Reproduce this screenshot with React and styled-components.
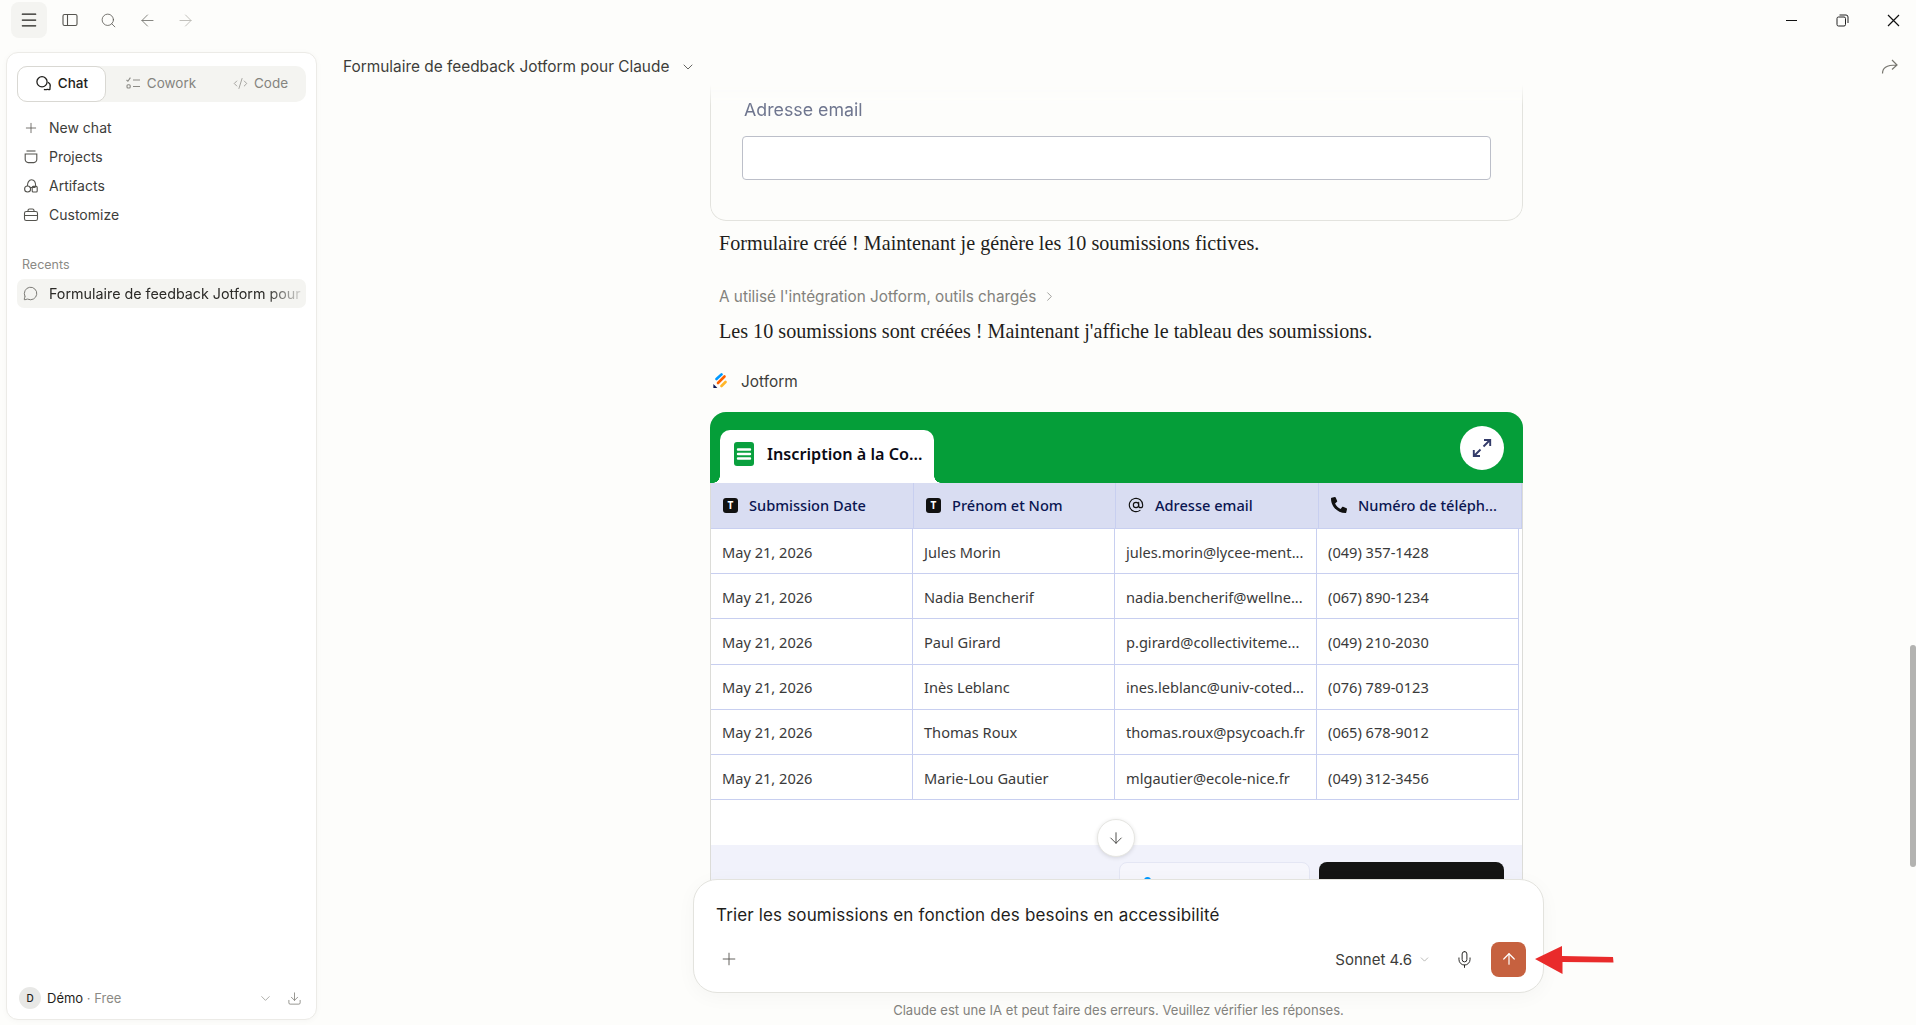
import styled, { createGlobalStyle } from "styled-components";
import { Menu, Search, ArrowLeft, ArrowRight, Plus, ChevronDown, ChevronRight, Download, Mic, ArrowUp, AtSign, MessageCircle, CodeXml } from "lucide-react";
import { FaPhone } from "react-icons/fa";

const GlobalStyle = createGlobalStyle`
  html, body { margin: 0; padding: 0; height: 100%; overflow: hidden; background: #fdfdfb; }
  #root { height: 100%; }
  * { box-sizing: border-box; }
`;

const SANS = `Inter, "Liberation Sans", sans-serif`;
const TABLE_FONT = `"Noto Sans", "Open Sans", sans-serif`;

const rows = [
  ["Jules Morin", "jules.morin@lycee-ment...", "(049) 357-1428"],
  ["Nadia Bencherif", "nadia.bencherif@wellne...", "(067) 890-1234"],
  ["Paul Girard", "p.girard@collectiviteme...", "(049) 210-2030"],
  ["Inès Leblanc", "ines.leblanc@univ-coted...", "(076) 789-0123"],
  ["Thomas Roux", "thomas.roux@psycoach.fr", "(065) 678-9012"],
  ["Marie-Lou Gautier", "mlgautier@ecole-nice.fr", "(049) 312-3456"],
];

const PanelIcon = () => (
  <svg width="16" height="16" viewBox="0 0 16 16" fill="none" stroke="#55544f" strokeWidth="1.1">
    <rect x="1" y="2.5" width="14" height="11" rx="1.5" />
    <path d="M5.5 2.5v11" />
  </svg>
);

const ChatIcon = () => (
  <svg width="17" height="17" viewBox="0 0 16 16" fill="none" stroke="#1f1e1b" strokeWidth="1.2">
    <circle cx="6.6" cy="6.4" r="4.8" />
    <path d="M12.2 6.8c1.600.8 2.400 2.200 2.100 3.800-.1.800-.3 1.300-.2 2.400.1.600-.3.900-.9.700-1-.2-1.700-.3-2.600 0-.8.200-1.500.2-2.200-.1" />
  </svg>
);

const CoworkIcon = () => (
  <svg width="16" height="16" viewBox="0 0 16 16" fill="none" stroke="#8b8a85" strokeWidth="1.1">
    <path d="M1.5 5l1.4 1.2L5.4 2.6M8 5h7M8 11.5h7" />
    <rect x="2" y="9.8" width="3.2" height="3.2" rx="1" />
  </svg>
);

const ProjectsIcon = () => (
  <svg width="16" height="16" viewBox="0 0 16 16" fill="none" stroke="#55544f" strokeWidth="1.1">
    <path d="M3.5 2h9" />
    <path d="M2.2 5h11.6v5.6a3 3 0 0 1-3 3H5.200a3 3 0 0 1-3-3z" />
  </svg>
);

const ArtifactsIcon = () => (
  <svg width="16" height="16" viewBox="0 0 16 16" fill="none" stroke="#55544f" strokeWidth="1.1">
    <circle cx="4.6" cy="11" r="3" />
    <rect x="9.2" y="8.4" width="5" height="5.6" rx="1" />
    <path d="M4.4 8C4.400 4.500 6 1.800 8.500 1.800S12.700 4.500 12.700 8.400M6.500 9.500h6" />
  </svg>
);

const BriefcaseIcon = () => (
  <svg width="16" height="16" viewBox="0 0 16 16" fill="none" stroke="#55544f" strokeWidth="1.1">
    <rect x="1.5" y="4.5" width="13" height="9" rx="1.8" />
    <path d="M5 4.500V3.500a1.500 1.500 0 0 1 1.500-1.500h3A1.500 1.500 0 0 1 11 3.500v1M1.500 8.500h13" />
  </svg>
);

const RestoreIcon = () => (
  <svg width="13" height="13" viewBox="0 0 13 13" fill="none" stroke="#222" strokeWidth="1">
    <rect x="1" y="3" width="8.5" height="9" rx="1.5" />
    <path d="M3.500 1h6.500a2 2 0 0 1 2 2v6" />
  </svg>
);

const ShareIcon = () => (
  <svg width="18" height="18" viewBox="0 0 18 18" fill="none" stroke="#77766f" strokeWidth="1.2">
    <path d="M1.500 15.500c0-5.500 3.500-8.500 14-8.500M11 2l5 5-5 4.500" />
  </svg>
);

const CloseIcon = () => (
  <svg width="13" height="13" viewBox="0 0 13 13" fill="none" stroke="#111" strokeWidth="1.2">
    <path d="M1 1l11 11M12 1L1 12" />
  </svg>
);

const JotformLogo = () => (
  <svg width="14" height="16" viewBox="0 0 14 16" fill="none" strokeLinecap="round" strokeWidth="2.6">
    <path d="M3.500 6 8.500 1.400" stroke="#0099ff" />
    <path d="M5 10 11.500 3.500" stroke="#ff6100" />
    <path d="M8.500 13 12.500 9" stroke="#ffb629" />
    <path d="M.4 11v4h4z" fill="#0a1551" />
  </svg>
);

const FormIcon = () => (
  <svg width="20" height="24" viewBox="0 0 20 24">
    <rect width="20" height="24" rx="3" fill="#09a03e" />
    <path d="M4 7.500h12M4 12h12M4 16.500h12" stroke="#fff" strokeWidth="2.4" strokeLinecap="round" />
  </svg>
);

const ExpandIcon = () => (
  <svg width="20" height="20" viewBox="0 0 20 20" fill="none" stroke="#343c6a" strokeWidth="1.9">
    <path d="M11.500 8.500 18 2M12 2h6.200v6M8.500 11.500 2 18M8 18H1.800v-6" />
  </svg>
);

const RedArrow = () => (
  <svg width="82" height="30" viewBox="0 0 82 30">
    <path d="M1 14 28 1v10l51 1 .5 5.500-51-.5v12z" fill="#e92b2b" />
  </svg>
);

const tabs = [
  { label: "Chat", icon: <ChatIcon />, active: true },
  { label: "Cowork", icon: <CoworkIcon /> },
  { label: "Code", icon: <CodeXml size={15} strokeWidth={1.2} color="#8b8a85" /> },
];

const navItems = [
  { label: "New chat", icon: <Plus size={16} strokeWidth={1.2} color="#55544f" /> },
  { label: "Projects", icon: <ProjectsIcon /> },
  { label: "Artifacts", icon: <ArtifactsIcon /> },
  { label: "Customize", icon: <BriefcaseIcon /> },
];

const ArrowDownGlyph = styled(ArrowUp)`
  transform: rotate(180deg);
`;

const PhoneGlyph = styled(FaPhone)`
  font-size: 16px;
  color: #111;
  transform: scaleX(-1);
`;

export default function App() {
  return (
    <>
      <GlobalStyle />
      <Page>
        <TopBar>
          <TopLeft>
            <MenuButton><Menu size={20} strokeWidth={1.5} color="#1f1e1b" /></MenuButton>
            <TopIcon $w={42}><PanelIcon /></TopIcon>
            <TopIcon $w={34}><Search size={17} strokeWidth={1.1} color="#55544f" /></TopIcon>
            <TopIcon $w={44}><ArrowLeft size={19} strokeWidth={1.1} color="#75746f" /></TopIcon>
            <TopIcon $w={32}><ArrowRight size={19} strokeWidth={1.1} color="#b9b8b2" /></TopIcon>
          </TopLeft>
          <WindowControls>
            <WindowButton><MinimizeLine /></WindowButton>
            <WindowButton><RestoreIcon /></WindowButton>
            <WindowButton><CloseIcon /></WindowButton>
          </WindowControls>
        </TopBar>
        <Body>
          <Sidebar>
            <div>
              <Switcher>
                {tabs.map((t) => (
                  <SwitchTab key={t.label} $active={t.active}>{t.icon}{t.label}</SwitchTab>
                ))}
              </Switcher>
              <Nav>
                {navItems.map((n) => (
                  <NavItem key={n.label}><NavIcon>{n.icon}</NavIcon>{n.label}</NavItem>
                ))}
              </Nav>
              <RecentsLabel>Recents</RecentsLabel>
              <RecentRow>
                <NavIcon><MessageCircle size={15} strokeWidth={1.2} color="#55544f" /></NavIcon>
                <RecentText>Formulaire de feedback Jotform pour</RecentText>
              </RecentRow>
            </div>
            <UserRow>
              <Avatar>D</Avatar>
              <UserName>Démo <UserPlan>· Free</UserPlan></UserName>
              <ChevronDown size={15} strokeWidth={1.1} color="#8b8a85" />
              <UserDownload><Download size={15} strokeWidth={1.2} color="#77766f" /></UserDownload>
            </UserRow>
          </Sidebar>
          <Main>
            <ChatHeader>
              <ChatTitle>Formulaire de feedback Jotform pour Claude</ChatTitle>
              <ChevronDown size={16} strokeWidth={1.2} color="#3d3d3a" />
              <HeaderShare><ShareIcon /></HeaderShare>
            </ChatHeader>
            <Thread>
              <FormCard>
                <FormLabel>Adresse email</FormLabel>
                <FormInput />
              </FormCard>
              <Message $top={8}>Formulaire créé ! Maintenant je génère les 10 soumissions fictives.</Message>
              <ToolLine>A utilisé l'intégration Jotform, outils chargés <ChevronRight size={15} strokeWidth={1.2} /></ToolLine>
              <Message $top={11}>Les 10 soumissions sont créées ! Maintenant j'affiche le tableau des soumissions.</Message>
              <AppLabel><JotformLogo />Jotform</AppLabel>
              <TableCard>
                <GreenBar>
                  <FormTab><FormIcon /><FormTabText>Inscription à la Co...</FormTabText></FormTab>
                  <ExpandButton><ExpandIcon /></ExpandButton>
                </GreenBar>
                <HeadRow>
                  <HeadCell><TypeBadge>T</TypeBadge>Submission Date</HeadCell>
                  <HeadCell><TypeBadge>T</TypeBadge>Prénom et Nom</HeadCell>
                  <HeadCell><AtSign size={16} strokeWidth={1.7} color="#111" />Adresse email</HeadCell>
                  <HeadCell><PhoneGlyph />Numéro de téléph...</HeadCell>
                </HeadRow>
                {rows.map((r) => (
                  <BodyRow key={r[0]}>
                    <BodyCell>May 21, 2026</BodyCell>
                    {r.map((c) => <BodyCell key={c}>{c}</BodyCell>)}
                  </BodyRow>
                ))}
                <TableSpacer />
                <TableFooter>
                  <PagerCard><PagerDot /></PagerCard>
                  <BlackButton />
                </TableFooter>
              </TableCard>
            </Thread>
            <ScrollDown><ArrowDownGlyph size={18} strokeWidth={1.2} color="#3d3d3a" /></ScrollDown>
            <Dock>
              <Composer>
                <ComposerText>Trier les soumissions en fonction des besoins en accessibilité</ComposerText>
                <ComposerRow>
                  <AddButton><Plus size={20} strokeWidth={1.1} color="#55544f" /></AddButton>
                  <ModelPicker>Sonnet 4.6 <ChevronDown size={13} strokeWidth={1.1} color="#8b8a85" /></ModelPicker>
                  <MicButton><Mic size={19} strokeWidth={1.2} color="#1f1e1b" /></MicButton>
                  <SendButton><ArrowUp size={18} strokeWidth={1.6} color="#fff" /></SendButton>
                </ComposerRow>
                <ArrowMark><RedArrow /></ArrowMark>
              </Composer>
              <Disclaimer>Claude est une IA et peut faire des erreurs. Veuillez vérifier les réponses.</Disclaimer>
            </Dock>
            <ScrollThumb />
          </Main>
        </Body>
      </Page>
    </>
  );
}

const Page = styled.div`
  display: flex;
  flex-direction: column;
  height: 100vh;
  overflow: hidden;
  background: #fdfdfb;
  font-family: ${SANS};
`;

const TopBar = styled.header`
  display: flex;
  justify-content: space-between;
  height: 40px;
  flex: none;
`;

const TopLeft = styled.div`
  display: flex;
  align-items: center;
  padding-left: 11px;
`;

const MenuButton = styled.div`
  width: 36px;
  height: 36px;
  border-radius: 8px;
  background: #f4f4f1;
  display: flex;
  align-items: center;
  justify-content: center;
  margin-right: 2px;
`;

const TopIcon = styled.div`
  width: ${(p) => p.$w}px;
  height: 36px;
  display: flex;
  align-items: center;
  justify-content: center;
`;

const WindowControls = styled.div`
  display: flex;
  align-items: center;
  gap: 5px;
`;

const WindowButton = styled.div`
  width: 46px;
  height: 40px;
  display: flex;
  align-items: center;
  justify-content: center;
`;

const MinimizeLine = styled.div`
  width: 11px;
  height: 1px;
  background: #111;
`;

const Body = styled.div`
  flex: 1;
  min-height: 0;
  display: flex;
`;

const Sidebar = styled.aside`
  width: 311px;
  flex: none;
  margin: 12px 0 5px 6px;
  background: #fff;
  border: 1px solid #ecebe7;
  border-radius: 12px;
  box-shadow: 0 1px 6px rgba(0, 0, 0, 0.03);
  padding: 13px 10px 10px;
  display: flex;
  flex-direction: column;
  justify-content: space-between;
`;

const Switcher = styled.div`
  display: grid;
  grid-template-columns: 89px 109px 1fr;
  height: 36px;
  background: #f4f4f1;
  border-radius: 10px;
  margin-bottom: 11px;
`;

const SwitchTab = styled.div`
  display: flex;
  align-items: center;
  justify-content: center;
  gap: 6px;
  padding-bottom: 2px;
  font-size: 13.5px;
  font-weight: ${(p) => (p.$active ? 500 : 400)};
  color: ${(p) => (p.$active ? "#1f1e1b" : "#85847f")};
  background: ${(p) => (p.$active ? "#fff" : "transparent")};
  border: ${(p) => (p.$active ? "1px solid #d9d8d3" : "none")};
  border-radius: 10px;
`;

const Nav = styled.nav`
  display: flex;
  flex-direction: column;
`;

const NavItem = styled.div`
  display: flex;
  align-items: center;
  height: 29px;
  font-size: 14px;
  color: #3d3d3a;
  padding-left: 6px;
`;

const NavIcon = styled.span`
  display: flex;
  width: 26px;
  flex: none;
`;

const RecentsLabel = styled.div`
  margin-top: 28px;
  margin-bottom: 6px;
  padding-left: 5px;
  font-size: 12.5px;
  color: #8b8a85;
  line-height: 16px;
`;

const RecentRow = styled.div`
  display: flex;
  align-items: center;
  height: 29px;
  padding-left: 6px;
  background: #f4f4f1;
  border-radius: 7px;
`;

const RecentText = styled.span`
  font-size: 14.3px;
  color: #2b2a27;
  white-space: nowrap;
  mask-image: linear-gradient(to right, #000 86%, rgba(0, 0, 0, 0.15) 100%);
`;

const UserRow = styled.div`
  display: flex;
  align-items: center;
  padding-left: 2px;
`;

const Avatar = styled.div`
  width: 22px;
  height: 22px;
  border-radius: 50%;
  background: #e8e8e6;
  display: flex;
  align-items: center;
  justify-content: center;
  font-size: 10px;
  font-weight: 500;
  color: #1f1e1b;
  margin-right: 6px;
`;

const UserName = styled.div`
  flex: 1;
  font-size: 13px;
  color: #1f1e1b;
`;

const UserPlan = styled.span`
  color: #8b8a85;
`;

const UserDownload = styled.span`
  display: flex;
  margin: 0 4px 0 14px;
`;

const Main = styled.main`
  flex: 1;
  min-width: 0;
  position: relative;
  overflow: hidden;
`;

const ChatHeader = styled.div`
  display: flex;
  align-items: center;
  gap: 11px;
  height: 45px;
  padding: 8px 0 0 26px;
`;

const ChatTitle = styled.div`
  font-size: 15.4px;
  color: #3d3d3a;
`;

const HeaderShare = styled.div`
  margin-left: auto;
  margin-right: 17px;
  display: flex;
`;

const Thread = styled.div`
  width: 813px;
  margin: 0 auto;
`;

const FormCard = styled.div`
  height: 136px;
  border: 1px solid #e3e3de;
  border-top: none;
  border-radius: 0 0 16px 16px;
  padding: 15px 31px 0 31px;
  mask-image: linear-gradient(to bottom, transparent 0, #000 20px);
  background: #fdfdfb;
`;

const FormLabel = styled.div`
  font-size: 17.8px;
  line-height: 20px;
  padding-left: 2px;
  color: #6f768f;
  margin-bottom: 16px;
`;

const FormInput = styled.div`
  height: 44px;
  border: 1px solid #bcbfc9;
  border-radius: 4px;
  background: #fff;
`;

const Message = styled.p`
  margin: ${(p) => p.$top}px 0 0 9px;
  font-family: "Liberation Serif", serif;
  font-size: 20.15px;
  line-height: 28px;
  color: #1f1e1b;
`;

const ToolLine = styled.div`
  display: flex;
  align-items: center;
  gap: 6px;
  margin: 29px 0 0 9px;
  height: 20px;
  font-size: 15.3px;
  color: #83827d;
`;

const AppLabel = styled.div`
  display: flex;
  align-items: center;
  gap: 14px;
  height: 20px;
  margin: 26px 0 0 3px;
  font-size: 15.4px;
  color: #3d3d3a;
`;

const TableCard = styled.div`
  margin-top: 21px;
  background: #fff;
  border: 1px solid #dcdcd8;
  border-top: none;
  border-radius: 16px 16px 0 0;
  font-family: ${TABLE_FONT};
`;

const GreenBar = styled.div`
  height: 71px;
  background: #059e39;
  border-radius: 16px 16px 0 0;
  margin: 0 -1px;
  display: flex;
  align-items: flex-end;
  justify-content: space-between;
  padding: 0 19px 0 10px;
`;

const FormTab = styled.div`
  position: relative;
  width: 214px;
  height: 53px;
  background: #fff;
  border-radius: 10px 10px 0 0;
  display: flex;
  align-items: center;
  gap: 13px;
  padding: 0 0 5px 14px;

  &::before,
  &::after {
    content: "";
    position: absolute;
    bottom: 0;
    width: 7px;
    height: 7px;
  }
  &::before {
    left: -7px;
    background: radial-gradient(circle at 0 0, transparent 6.5px, #fff 7px);
  }
  &::after {
    right: -7px;
    background: radial-gradient(circle at 100% 0, transparent 6.5px, #fff 7px);
  }
`;

const FormTabText = styled.span`
  font-size: 16.2px;
  font-weight: 600;
  color: #0a0a14;
  white-space: nowrap;
`;

const ExpandButton = styled.div`
  width: 44px;
  height: 44px;
  border-radius: 50%;
  background: #fff;
  align-self: flex-start;
  margin-top: 14px;
  display: flex;
  align-items: center;
  justify-content: center;
`;

const HeadRow = styled.div`
  display: grid;
  grid-template-columns: 203px 202px 203px 203px;
  height: 46px;
  background: #d9ddf2;
  border-bottom: 1px solid #c8cff0;
`;

const HeadCell = styled.div`
  display: flex;
  align-items: center;
  gap: 11px;
  padding: 0 0 1px 12px;
  font-size: 14.6px;
  font-weight: 500;
  color: #0a1551;
  border-right: 1px solid #c8cff0;
  white-space: nowrap;
`;

const TypeBadge = styled.span`
  width: 15px;
  height: 15px;
  border-radius: 3px;
  background: #111;
  color: #fff;
  font-size: 10px;
  font-weight: 700;
  display: flex;
  align-items: center;
  justify-content: center;
`;

const BodyRow = styled.div`
  display: grid;
  grid-template-columns: 202px 202px 202px 202px;
  width: 808px;
  height: 45.2px;
  border-bottom: 1px solid #c8cff0;
  border-right: 1px solid #c8cff0;
`;

const BodyCell = styled.div`
  display: flex;
  align-items: center;
  padding: 1px 0 0 11px;
  font-size: 14.6px;
  color: #3a3a3a;
  white-space: nowrap;
  border-right: 1px solid #c8cff0;
  &:last-child { border-right: none; }
`;

const TableSpacer = styled.div`
  height: 45px;
`;

const TableFooter = styled.div`
  height: 80px;
  background: #f1f2fb;
  display: flex;
  justify-content: flex-end;
  gap: 9px;
  padding: 17px 18px 0 0;
`;

const PagerCard = styled.div`
  position: relative;
  width: 191px;
  height: 60px;
  background: #f6f6fc;
  border: 1px solid #e4e6f4;
  border-radius: 8px;
`;

const PagerDot = styled.div`
  position: absolute;
  left: 24px;
  top: 14px;
  width: 7px;
  height: 7px;
  border-radius: 50%;
  background: #0099ff;
`;

const BlackButton = styled.div`
  width: 185px;
  height: 60px;
  background: #141413;
  border-radius: 8px;
`;

const ScrollDown = styled.div`
  position: absolute;
  left: 780px;
  top: 779px;
  width: 38px;
  height: 38px;
  border-radius: 50%;
  background: #fff;
  border: 1px solid #e6e6e2;
  box-shadow: 0 1px 4px rgba(0, 0, 0, 0.12);
  display: flex;
  align-items: center;
  justify-content: center;
`;

const Dock = styled.div`
  position: absolute;
  left: 376px;
  bottom: 0;
  width: 851px;
  height: 146px;
  background: linear-gradient(to bottom, transparent 0, transparent 40px, #fdfdfb 40px);
`;

const Composer = styled.div`
  position: relative;
  height: 114px;
  background: #fff;
  border: 1px solid #e3e3de;
  border-radius: 24px;
  box-shadow: 0 4px 20px rgba(0, 0, 0, 0.035);
  padding: 24px 17px 0 22px;
`;

const ComposerText = styled.div`
  font-size: 17px;
  letter-spacing: 0.15px;
  line-height: 22px;
  color: #1f1e1b;
`;

const ComposerRow = styled.div`
  display: flex;
  align-items: center;
  height: 36px;
  margin-top: 15px;
`;

const AddButton = styled.div`
  display: flex;
  margin-right: auto;
  padding-left: 3px;
`;

const ModelPicker = styled.div`
  display: flex;
  align-items: center;
  gap: 6px;
  font-size: 15px;
  color: #3d3d3a;
  margin-right: 24px;
`;

const MicButton = styled.div`
  display: flex;
  margin-right: 17px;
`;

const SendButton = styled.div`
  width: 35px;
  height: 35px;
  border-radius: 8px;
  background: #c6613f;
  display: flex;
  align-items: center;
  justify-content: center;
`;

const ArrowMark = styled.div`
  position: absolute;
  left: 840px;
  top: 65px;
  display: flex;
`;

const Disclaimer = styled.div`
  margin-top: 9px;
  text-align: center;
  font-size: 13.1px;
  line-height: 16px;
  color: #83827d;
`;

const ScrollThumb = styled.div`
  position: absolute;
  right: 0;
  top: 605px;
  width: 6px;
  height: 222px;
  border-radius: 3px;
  background: #b3b3b1;
`;
